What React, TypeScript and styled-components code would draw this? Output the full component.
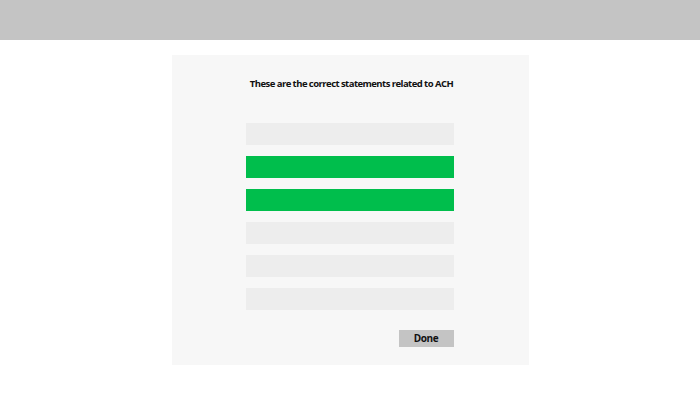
import React from "react";
import styled, { createGlobalStyle } from "styled-components";

const Global = createGlobalStyle`
  html, body { margin: 0; padding: 0; background: #ffffff; }
  body { font-family: "Open Sans", "Noto Sans", sans-serif; }
`;

const TopBar = styled.div`
  height: 40px;
  background: #c4c4c4;
`;

const Page = styled.div`
  display: flex;
  justify-content: center;
  padding-top: 15px;
`;

const Card = styled.div`
  width: 357px;
  height: 310px;
  box-sizing: border-box;
  background: #f7f7f7;
  padding: 22px 75px 0 74px;
  display: flex;
  flex-direction: column;
`;

const Title = styled.div`
  font-family: "Open Sans", "Noto Sans", sans-serif;
  font-size: 9.5px;
  font-weight: 700;
  letter-spacing: -0.55px;
  color: #111;
  text-align: center;
  line-height: 14px;
  padding-left: 4px;
  white-space: nowrap;
`;

const List = styled.div`
  margin-top: 32px;
  display: flex;
  flex-direction: column;
  gap: 11px;
`;

const Option = styled.div<{ $selected?: boolean }>`
  height: 22px;
  background: ${(p) => (p.$selected ? "#00be4c" : "#ededed")};
`;

const Footer = styled.div`
  display: flex;
  justify-content: flex-end;
  margin-top: 20px;
`;

const DoneButton = styled.button`
  width: 55px;
  height: 17px;
  border: none;
  padding: 0;
  background: #c4c4c4;
  font-family: "Open Sans", "Noto Sans", sans-serif;
  font-size: 10px;
  font-weight: 700;
  letter-spacing: -0.4px;
  line-height: 17px;
  color: #111;
`;

const options = [false, true, true, false, false, false];

export default function App() {
  return (
    <>
      <Global />
      <TopBar />
      <Page>
        <Card>
          <Title>These are the correct statements related to ACH</Title>
          <List>
            {options.map((s, i) => (
              <Option key={i} $selected={s} />
            ))}
          </List>
          <Footer>
            <DoneButton>Done</DoneButton>
          </Footer>
        </Card>
      </Page>
    </>
  );
}
